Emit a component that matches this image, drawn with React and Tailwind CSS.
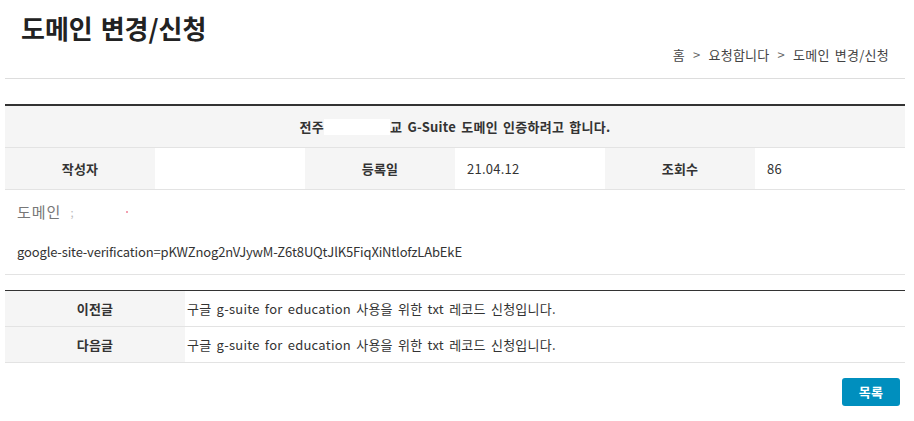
export default function App() {
  const info = [
    { label: "작성자", value: "" },
    { label: "등록일", value: "21.04.12" },
    { label: "조회수", value: "86" },
  ];

  const nav = [
    { label: "이전글", title: "구글 g-suite for education 사용을 위한 txt 레코드 신청입니다." },
    { label: "다음글", title: "구글 g-suite for education 사용을 위한 txt 레코드 신청입니다." },
  ];

  return (
    <div
      className="min-h-screen bg-white text-[#333] text-[13px] tracking-[0.25px] [word-spacing:2px]"
      style={{ fontFamily: '"Noto Sans CJK KR", "Noto Sans", sans-serif' }}
    >
      <div className="ml-[5px] w-[900px]">
        {/* Page header */}
        <div className="h-[79px] border-b border-[#ddd] flex flex-col">
          <h1 className="pt-[10px] pl-4 text-[26px] leading-[36px] font-bold text-[#222] tracking-normal">
            도메인 변경/신청
          </h1>
          <div className="flex justify-end pr-4 leading-[20px] -mt-px text-[#444]">
            <span>홈</span>
            <span className="mx-[8px] text-[#666]">&gt;</span>
            <span>요청합니다</span>
            <span className="mx-[8px] text-[#666]">&gt;</span>
            <span>도메인 변경/신청</span>
          </div>
        </div>

        {/* Post view */}
        <div className="mt-[25px] border-t-2 border-[#333]">
          <div className="h-[42px] bg-[#f5f5f5] border-b border-[#e3e3e3] flex items-center justify-center font-bold">
            <span>전주</span>
            <span className="inline-block w-[66px] h-[16px] bg-white"></span>
            <span>교 G-Suite 도메인 인증하려고 합니다.</span>
          </div>
          <div className="h-[42px] border-b border-[#e3e3e3] grid grid-cols-6">
            {info.map((item) => (
              <div key={item.label} className="contents">
                <div className="bg-[#f5f5f5] flex items-center justify-center font-bold">
                  {item.label}
                </div>
                <div className="flex items-center pl-3">{item.value}</div>
              </div>
            ))}
          </div>
          <div className="h-[85px] border-b border-[#e3e3e3] pl-3 flex flex-col">
            <div className="mt-[10px] leading-[24px] text-[15px] text-[#777] flex items-center">
              <span className="tracking-[1px]">도메인</span>
              <span className="ml-[9px] text-[11px] text-[#bbb]">;</span>
              <span className="ml-[52px] w-[2px] h-[2px] bg-[#f3a0b0]"></span>
            </div>
            <div className="mt-[18px] leading-[20px] text-[#333] tracking-[-0.15px]">
              google-site-verification=pKWZnog2nVJywM-Z6t8UQtJlK5FiqXiNtlofzLAbEkE
            </div>
          </div>
        </div>

        {/* Prev / next */}
        <div className="mt-[15px] border-t border-[#333]">
          {nav.map((row) => (
            <div key={row.label} className="h-[36px] border-b border-[#e3e3e3] flex">
              <div className="w-[180px] bg-[#f5f5f5] flex items-center justify-center font-bold">
                {row.label}
              </div>
              <div className="flex items-center pl-[2px]">{row.title}</div>
            </div>
          ))}
        </div>

        <div className="flex justify-end pr-[5px] mt-[15px]">
          <button className="w-[58px] h-[28px] rounded-[3px] bg-[#008fbe] text-white font-bold text-[13px]">
            목록
          </button>
        </div>
      </div>
    </div>
  );
}
